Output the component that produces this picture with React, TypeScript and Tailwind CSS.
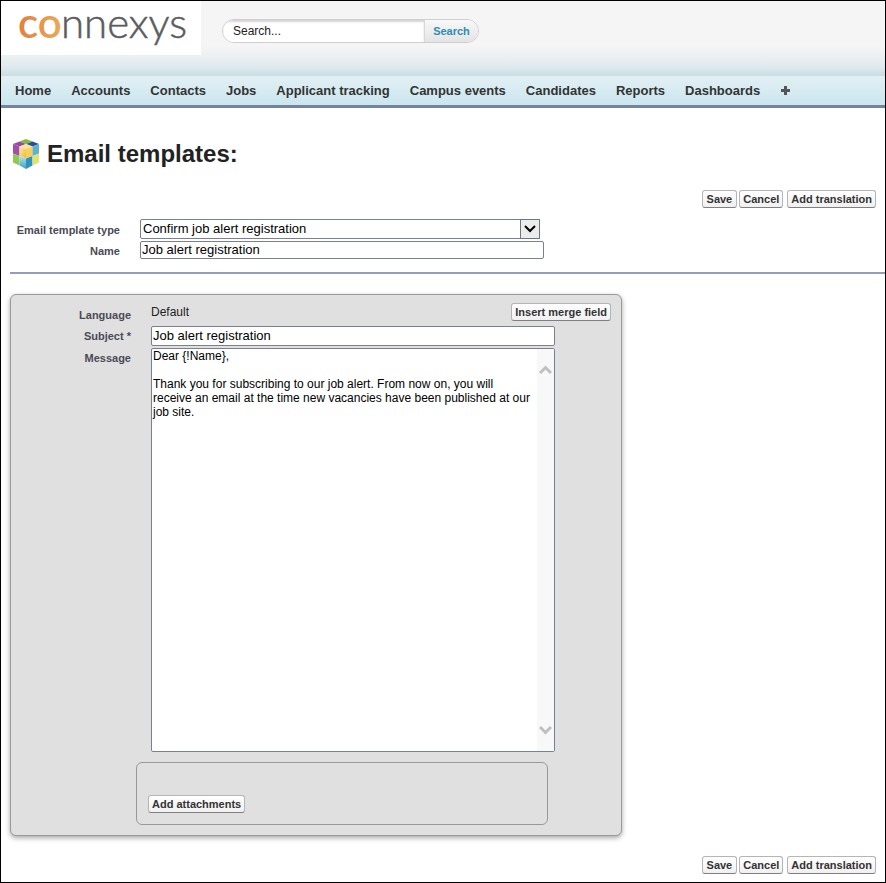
import type { ReactNode } from "react";

const tabs = [
  "Home",
  "Accounts",
  "Contacts",
  "Jobs",
  "Applicant tracking",
  "Campus events",
  "Candidates",
  "Reports",
  "Dashboards",
];

const message = `Dear {!Name},

Thank you for subscribing to our job alert. From now on, you will receive an email at the time new vacancies have been published at our job site.`;

function Button({ children }: { children: ReactNode }) {
  return (
    <button
      type="button"
      className="h-[18px] rounded-[3px] border border-[#b5b5b5] border-b-[#7f7f7f] bg-linear-to-b from-white to-[#f0f0f0] px-[3px] text-[11px] leading-4 font-bold whitespace-nowrap text-[#333]"
    >
      {children}
    </button>
  );
}

function Actions() {
  return (
    <div className="flex justify-end gap-1 pr-[9px]">
      <div className="flex gap-[2px]">
        <Button>
          <span className="px-px">Save</span>
        </Button>
        <Button>Cancel</Button>
      </div>
      <Button>Add translation</Button>
    </div>
  );
}

function Logo() {
  return (
    <svg width="200" height="54" viewBox="0 0 200 54" className="overflow-visible font-['Lato',sans-serif]">
      <defs>
        <linearGradient id="orange" x1="0" y1="0" x2="1" y2="0">
          <stop offset="0" stopColor="#e2803a" />
          <stop offset="1" stopColor="#eba95a" />
        </linearGradient>
      </defs>
      <text x="17" y="37" fontSize="42" fontWeight="600" fill="url(#orange)">
        co
      </text>
      <text x="60" y="37" fontSize="42" fontWeight="300" fill="#5c5c60" stroke="#5c5c60" strokeWidth="0.5">
        nnexys
      </text>
    </svg>
  );
}

function CubeIcon() {
  return (
    <svg width="28" height="32" viewBox="0 0 28 32" aria-hidden="true">
      <defs>
        <linearGradient id="gold" x1="0" y1="0" x2="1" y2="1">
          <stop offset="0" stopColor="#fbe6a0" />
          <stop offset="1" stopColor="#f2b93f" />
        </linearGradient>
        <linearGradient id="aqua" x1="0" y1="0" x2="0" y2="1">
          <stop offset="0" stopColor="#b4e4e6" />
          <stop offset="1" stopColor="#3f9fc6" />
        </linearGradient>
      </defs>
      {/* top face */}
      <path d="M14 1l6.500 2.500L14 6 7.500 3.500z" fill="#86b840" />
      <path d="M7.500 3.500 14 6 7.500 8.500 1 6z" fill="#8f4f9c" />
      <path d="M20.500 3.500 27 6l-6.500 2.500L14 6z" fill="#24509c" />
      <path d="M14 6l6.500 2.500L14 11 7.500 8.500z" fill="#fbe3a4" />
      {/* left face */}
      <path d="M1 6l6.500 2.500V18L1 15.500z" fill="#a04fae" />
      <path d="M7.500 8.500 14 11v9.500L7.500 18z" fill="url(#gold)" />
      <path d="M1 15.500 7.500 18v9.500L1 24.500z" fill="#93c652" />
      <path d="M7.500 18l6.500 2.500V31l-6.500-3.500z" fill="url(#aqua)" />
      {/* right face */}
      <path d="M14 11l6.500-2.500V18L14 20.500z" fill="#f7d155" />
      <path d="M20.500 8.500 27 6v9.500L20.500 18z" fill="#5fb2cf" />
      <path d="M14 20.500l6.500-2.500v9.500L14 31z" fill="#2f93c0" />
      <path d="M20.500 18l6.500-2.500v9l-6.500 3z" fill="#dfe374" />
    </svg>
  );
}

function Chevron({ up = false }: { up?: boolean }) {
  return (
    <svg width="13" height="10" viewBox="0 0 13 10" aria-hidden="true">
      <path
        d={up ? "M1 8l5.500-5.500L12 8" : "M1 2l5.500 5.500L12 2"}
        fill="none"
        stroke="#bfbfbf"
        strokeWidth="3"
      />
    </svg>
  );
}

function Header() {
  return (
    <header>
      <div className="flex h-[75px] items-start bg-linear-to-b from-[#f5f5f5] from-60% via-[#e0eaee] via-88% to-[#c8dde3]">
        <a href="#" aria-label="connexys" className="block shrink-0 bg-white">
          <Logo />
        </a>
        <form className="mt-[18px] ml-[21px] flex h-6 w-[257px] overflow-hidden rounded-full border border-[#cfcfcf]">
          <input
            type="text"
            aria-label="Search"
            defaultValue="Search..."
            className="min-w-0 flex-1 bg-white pl-[10px] text-[12px] text-[#222] inset-shadow-[0_2px_2px_#d5d5d5]"
          />
          <button
            type="button"
            className="w-[54px] border-l border-[#d8d8d8] bg-linear-to-b from-[#f8f8f8] to-[#e4e4e4] text-[11px] font-bold text-[#2f8db0]"
          >
            Search
          </button>
        </form>
      </div>
      <nav className="flex h-8 items-center gap-5 border-b-3 border-[#75839b] bg-linear-to-b from-[#e2f0f4] to-[#cbe6ef] pl-[14px] text-[13px] font-bold text-[#333]">
        {tabs.map((tab) => (
          <a key={tab} href="#" className="whitespace-nowrap">
            {tab}
          </a>
        ))}
        <a href="#" aria-label="All tabs">
          <svg width="11" height="11" viewBox="0 0 11 11" aria-hidden="true">
            <path d="M4 1h3v3h3v3H7v3H4V7H1V4h3z" fill="#555" />
          </svg>
        </a>
      </nav>
    </header>
  );
}

const labelClass = "text-right text-[11px] leading-4 font-bold text-[#4a4a56]";
const inputClass =
  "w-full rounded-[2px] border border-[#7a7f92] bg-white px-px text-[13px] text-black";

export default function App() {
  return (
    <div className="min-h-screen border border-black bg-white font-['Liberation_Sans',Arial,sans-serif]">
      <Header />
      <main className="pb-2 pl-[9px]">
        <h1 className="mt-[30px] flex items-center gap-[7px] pl-[2px] text-[24px] leading-8 font-bold text-[#222]">
          <CubeIcon />
          Email templates:
        </h1>

        <div className="mt-5">
          <Actions />
        </div>

        <div className="mt-[11px] grid grid-cols-[110px_minmax(0,404px)] items-center gap-x-5 gap-y-[2px] border-b-2 border-[#929db8] pb-[13px]">
          <label htmlFor="type" className={`${labelClass} pt-[2px]`}>
            Email template type
          </label>
          <div className="relative w-[400px] max-w-full">
            <select
              id="type"
              className="block h-5 w-full appearance-none rounded-[2px] border border-[#7a7f92] bg-white pl-[2px] text-[13px] leading-[18px] text-black"
            >
              <option>Confirm job alert registration</option>
            </select>
            <span className="pointer-events-none absolute inset-y-0 right-0 flex w-5 items-center justify-center border border-[#6f7484] bg-[#ececec]">
              <svg width="12" height="8" viewBox="0 0 12 8" aria-hidden="true">
                <path d="M1 1l5 5 5-5" fill="none" stroke="#000" strokeWidth="2" />
              </svg>
            </span>
          </div>
          <label htmlFor="name" className={`${labelClass} pt-[2px]`}>
            Name
          </label>
          <input id="name" defaultValue="Job alert registration" className={`${inputClass} h-[18px]`} />
        </div>

        <section className="mt-5 max-w-[612px] rounded-md border border-[#999] bg-[#e0e0e0] pt-2 pr-[11px] pb-[10px] shadow-[0_2px_5px_rgba(0,0,0,0.35)]">
          <div className="grid grid-cols-[120px_minmax(0,404px)] gap-x-5 gap-y-[2px]">
            <span className={`${labelClass} pt-1`}>Language</span>
            <div className="-mr-14 flex h-[21px] items-start justify-between">
              <span className="text-[12px] leading-[18px] text-[#222]">Default</span>
              <Button>Insert merge field</Button>
            </div>
            <label htmlFor="subject" className={`${labelClass} pt-[2px]`}>
              Subject *
            </label>
            <input id="subject" defaultValue="Job alert registration" className={`${inputClass} h-5 pb-[2px]`} />
            <label htmlFor="message" className={`${labelClass} pt-[2px]`}>
              Message
            </label>
            <div className="relative">
              <textarea
                id="message"
                defaultValue={message}
                className="block h-[404px] w-full resize-none overflow-hidden rounded-[2px] border border-[#7a7f92] bg-white pr-5 pl-px text-[12px] leading-[14px] text-black"
              />
              <div className="pointer-events-none absolute inset-y-px right-px flex w-[17px] flex-col items-center justify-between bg-[#f8f8f8] py-4">
                <Chevron up />
                <Chevron />
              </div>
            </div>
          </div>
          <div className="mt-[10px] ml-[125px] flex h-[63px] max-w-[412px] items-end rounded-md border border-[#999] pb-[11px] pl-[11px]">
            <Button>Add attachments</Button>
          </div>
        </section>

        <div className="mt-5">
          <Actions />
        </div>
      </main>
    </div>
  );
}
